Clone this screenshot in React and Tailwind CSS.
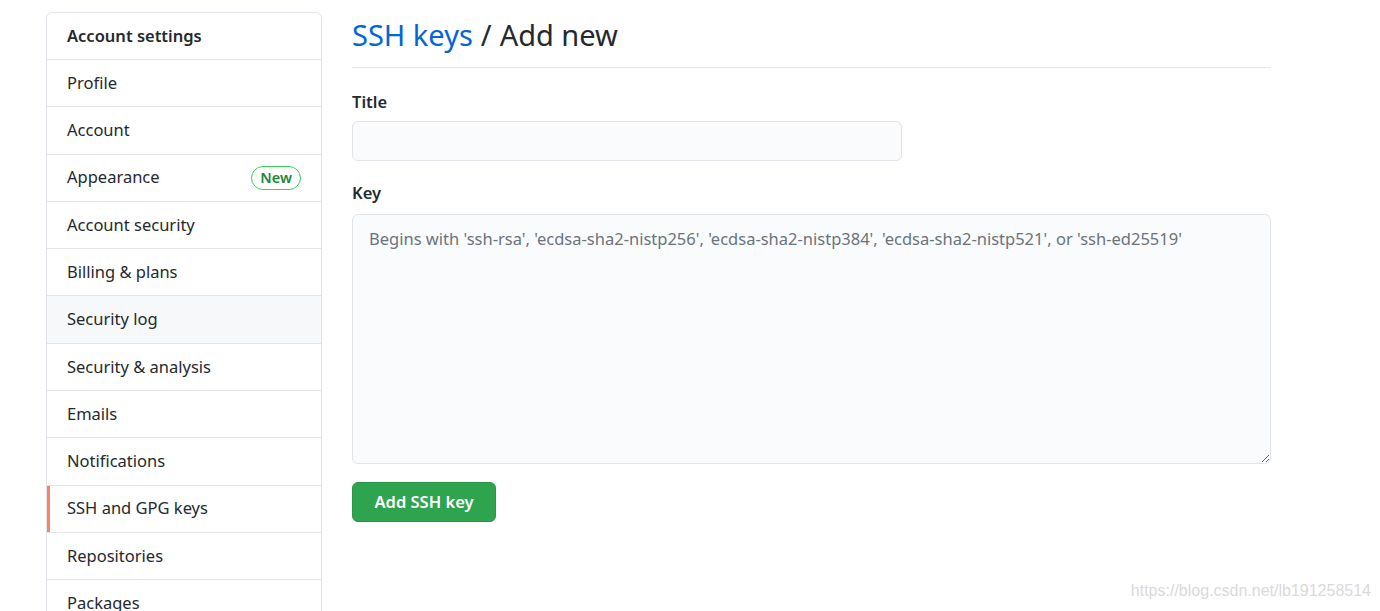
import React from "react";

const items = [
    { label: "Profile" },
    { label: "Account" },
    { label: "Appearance", badge: "New" },
    { label: "Account security" },
    { label: "Billing & plans" },
    { label: "Security log", hover: true },
    { label: "Security & analysis" },
    { label: "Emails" },
    { label: "Notifications" },
    { label: "SSH and GPG keys", selected: true },
    { label: "Repositories" },
    { label: "Packages" },
];

function Sidebar() {
    return (
        <nav className="w-[276px] shrink-0 border border-[#e1e4e8] rounded-md overflow-hidden bg-white">
            <div className="h-[47px] flex items-center pl-5 font-semibold text-[#24292e] text-[16.5px] border-b border-[#e1e4e8]">
                Account settings
            </div>
            {items.map((item) => (
                <div
                    key={item.label}
                    className={
                        "relative h-[47.3px] flex items-center justify-between pl-5 pr-5 text-[16.5px] text-[#24292e] border-b border-[#e1e4e8] " +
                        (item.hover ? "bg-[#f6f8fa]" : "bg-white")
                    }>
                    {item.selected && (
                        <span className="absolute left-0 top-0 bottom-0 w-[3px] bg-[#f9826c]" />
                    )}
                    <span>{item.label}</span>
                    {item.badge && (
                        <span className="border border-[#34d058] text-[#22863a] rounded-full px-2 h-[24px] flex items-center text-[14.5px] font-semibold">
                            {item.badge}
                        </span>
                    )}
                </div>
            ))}
        </nav>
    );
}

export default function App() {
    return (
        <div className="relative h-[611px] overflow-hidden bg-white font-['Noto_Sans',sans-serif]">
            <div className="flex gap-[30px] pl-[46px] pt-[12px]">
                <Sidebar />

                <div className="w-[919px]">
                    <div className="h-[56px] flex items-center border-b border-[#e1e4e8] text-[29px] text-[#24292e] pb-[9px]">
                        <span className="text-[#0366d6]">SSH keys</span>
                        <span className="mx-[8px]">/</span>
                        <span>Add new</span>
                    </div>

                    <form className="pt-[22px]">
                        <p className="font-semibold text-[16.5px] text-[#24292e] leading-[24px]">Title</p>
                        <input
                            type="text"
                            className="mt-[7px] w-[550px] h-[40px] bg-[#fafbfc] border border-[#e1e4e8] rounded-md px-4 text-[16.5px] outline-none"
                        />

                        <p className="mt-[20px] font-semibold text-[16.5px] text-[#24292e] leading-[24px]">Key</p>
                        <textarea
                            placeholder="Begins with 'ssh-rsa', 'ecdsa-sha2-nistp256', 'ecdsa-sha2-nistp384', 'ecdsa-sha2-nistp521', or 'ssh-ed25519'"
                            className="mt-[9px] block w-full h-[250px] bg-[#fafbfc] border border-[#e1e4e8] rounded-md px-4 py-[12px] text-[16.5px] text-[#24292e] placeholder:text-[#6a737d] outline-none"
                        />

                        <button
                            type="button"
                            className="mt-[18px] w-[144px] h-[40px] bg-[#2ea44f] text-white font-semibold text-[16.5px] rounded-md border border-[#2a9447]">
                            Add SSH key
                        </button>
                    </form>
                </div>
            </div>

            <div className="absolute right-[9px] bottom-[8px] text-[16px] text-[#d9d9d9] font-['Liberation_Sans',sans-serif]">
                https://blog.csdn.net/lb191258514
            </div>
        </div>
    );
}
